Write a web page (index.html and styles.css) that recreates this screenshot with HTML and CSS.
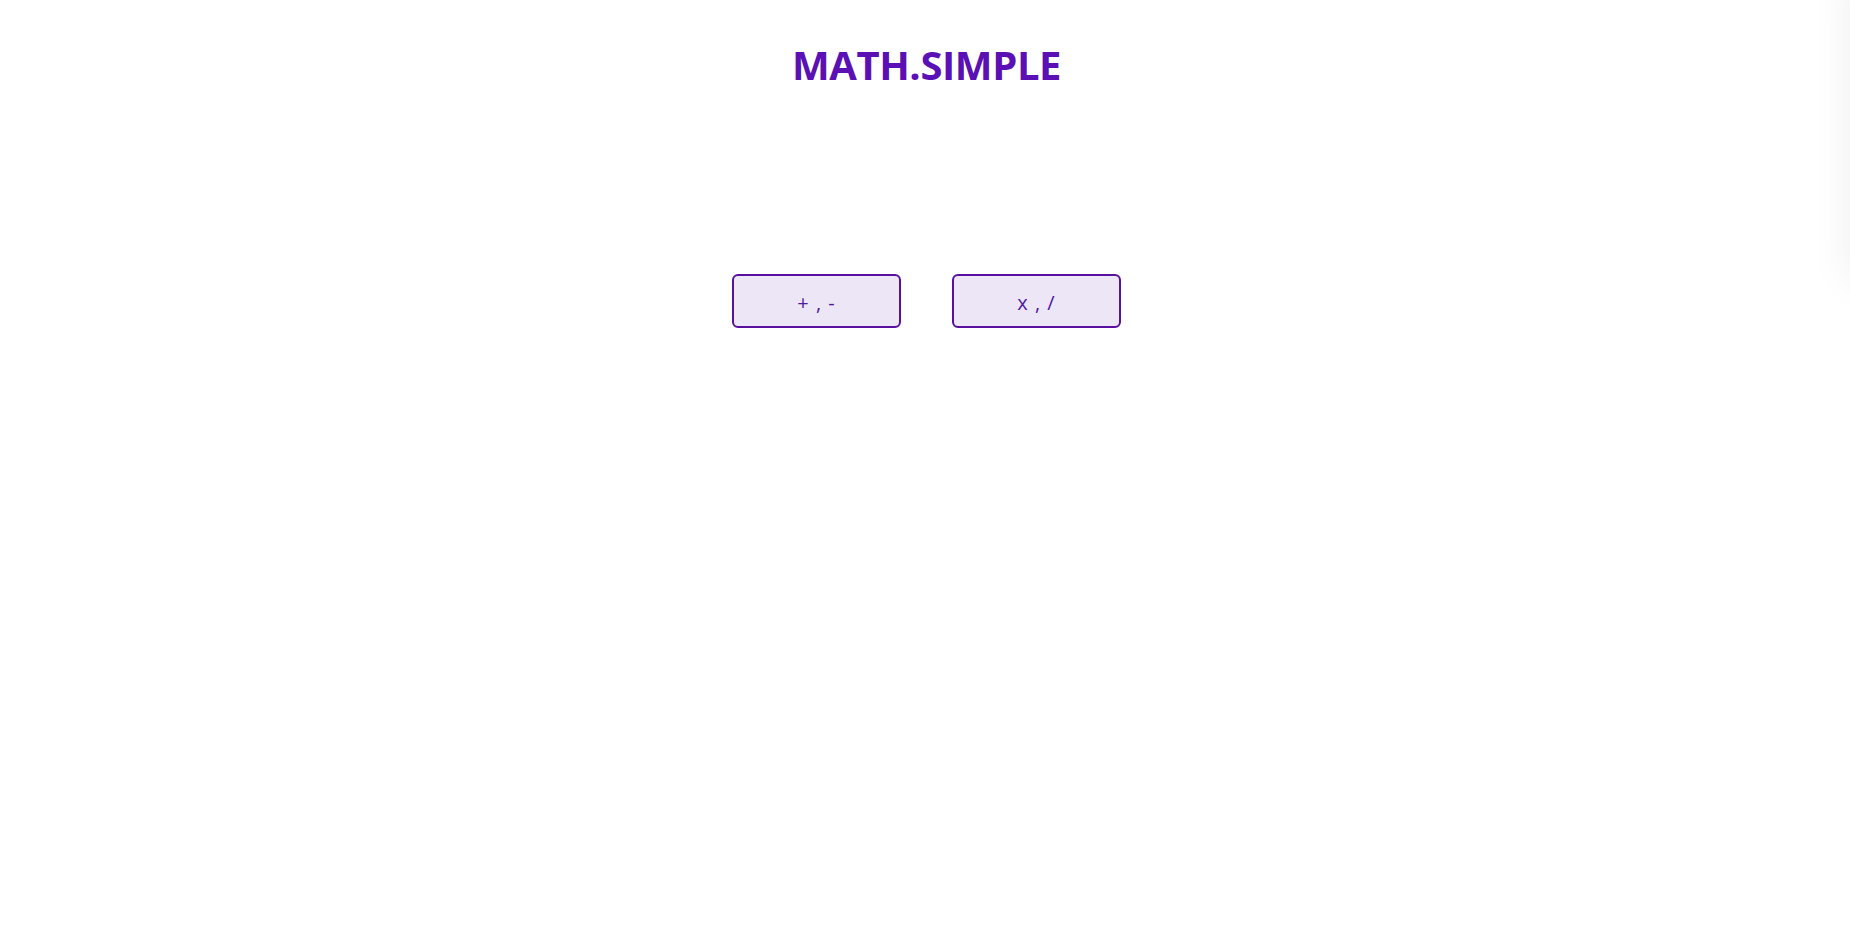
FILE: index.html
```html
<!DOCTYPE html>
<html lang="en">
<head>
<meta charset="utf-8">
<title>MATH.SIMPLE</title>
<link rel="stylesheet" href="styles.css">
</head>
<body>
<header class="header">
  <h1 class="logo">MATH.SIMPLE</h1>
</header>
<main class="menu">
  <button class="op-btn">+ , -</button>
  <button class="op-btn">x , /</button>
</main>
<aside class="drawer"></aside>
</body>
</html>
```

FILE: styles.css
```css
html, body {
  margin: 0;
  padding: 0;
  background: #ffffff;
  font-family: "Open Sans", "Noto Sans", sans-serif;
}

.header {
  display: flex;
  justify-content: center;
  padding-top: 38px;
}

.logo {
  margin: 0;
  font-size: 40px;
  font-weight: 700;
  line-height: 54px;
  color: #5a10b4;
  letter-spacing: -0.4px;
  padding-left: 3px;
}

.menu {
  display: flex;
  justify-content: center;
  gap: 51px;
  padding-top: 182px;
  padding-left: 2px;
}

.op-btn {
  box-sizing: border-box;
  width: 169px;
  height: 54px;
  border: 2px solid #5a109f;
  border-radius: 6px;
  background: #ede6f6;
  color: #4c1aa3;
  font-family: "Open Sans", "Noto Sans", sans-serif;
  font-size: 20px;
  word-spacing: 2px;
  padding: 2px 0 0;
  cursor: pointer;
}

.drawer {
  position: fixed;
  top: -20px;
  left: 100%;
  width: 300px;
  height: 300px;
  background: #fff;
  box-shadow: 0 0 40px rgba(0, 0, 0, 0.07);
}
```
